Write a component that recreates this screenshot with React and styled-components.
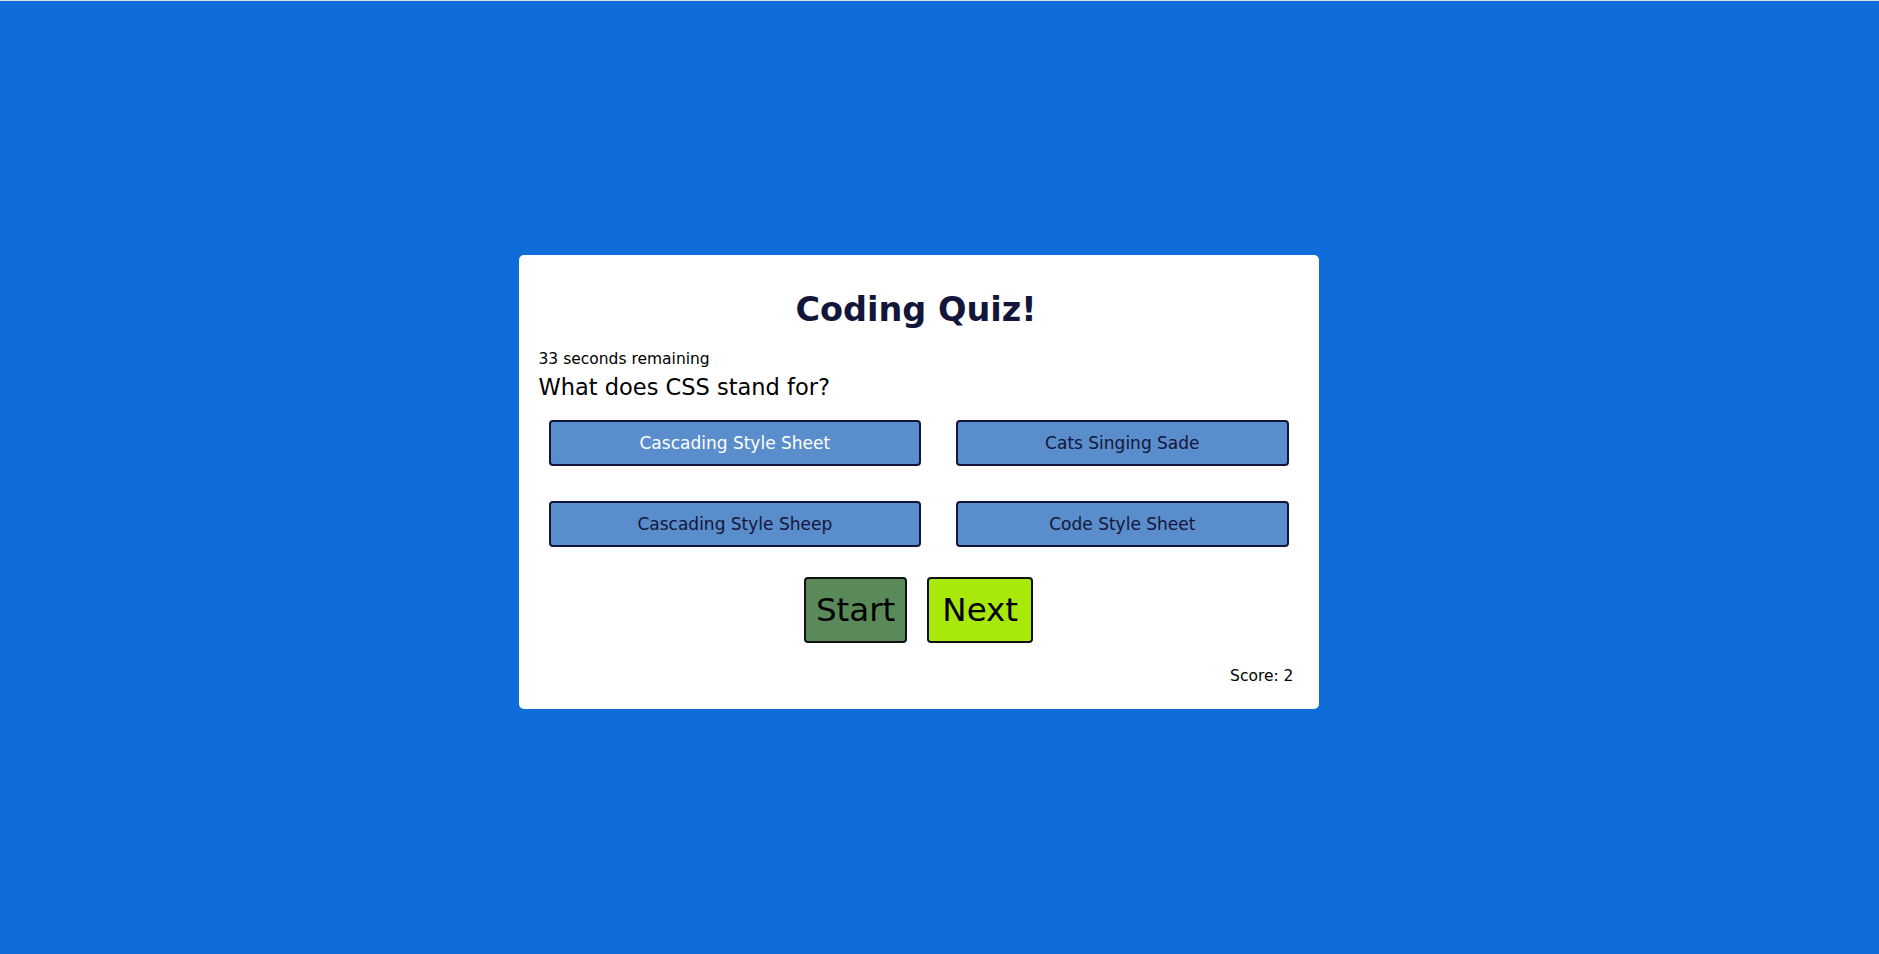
import React, { useState } from "react";
import styled, { createGlobalStyle } from "styled-components";

const GlobalStyle = createGlobalStyle`
  html, body {
    margin: 0;
    padding: 0;
    background: #106cd9;
  }
  body {
    font-family: "DejaVu Sans", Verdana, sans-serif;
  }
`;

const Page = styled.main`
  min-height: 954px;
  box-sizing: border-box;
  border-top: 1px solid #dfe3e8;
  display: flex;
  justify-content: center;
  align-items: center;
  padding: 9px 42px 0 0;
`;

const Card = styled.section`
  width: 800px;
  box-sizing: border-box;
  background: #ffffff;
  border-radius: 5px;
  padding: 35px 25px 24px 20px;
  display: flex;
  flex-direction: column;
`;

const Title = styled.h1`
  margin: 0 0 21px;
  text-align: center;
  font-size: 33.5px;
  font-weight: bold;
  color: #13153a;
`;

const Timer = styled.p`
  margin: 0 0 6px;
  font-size: 15.5px;
  color: #000;
`;

const Question = styled.h2`
  margin: 0 0 20px;
  font-size: 22.5px;
  font-weight: normal;
  color: #000;
`;

const Answers = styled.div`
  display: grid;
  grid-template-columns: auto auto;
  gap: 35px 35px;
  margin: 0 5px 0 10px;
`;

const AnswerButton = styled.button`
  height: 46px;
  box-sizing: border-box;
  border: 2px solid #13163a;
  border-radius: 4px;
  background: #5a8dcb;
  color: ${({ $active }) => ($active ? "#ffffff" : "#13153a")};
  font-family: inherit;
  font-size: 17px;
  padding: 0 24px;
  cursor: pointer;
`;

const Controls = styled.div`
  display: flex;
  justify-content: center;
  gap: 20px;
  margin: 30px 0 24px;
  padding-left: 5px;
`;

const ControlButton = styled.button`
  height: 66px;
  box-sizing: border-box;
  border: 2px solid #111;
  border-radius: 4px;
  background: ${({ $tone }) => $tone};
  color: #000;
  font-family: inherit;
  font-size: 32.5px;
  padding: 0 ${({ $pad }) => $pad}px;
  cursor: pointer;
`;

const Score = styled.p`
  margin: 0;
  text-align: right;
  font-size: 15.5px;
  color: #000;
`;

const answers = [
  "Cascading Style Sheet",
  "Cats Singing Sade",
  "Cascading Style Sheep",
  "Code Style Sheet",
];

export default function App() {
  const [hovered] = useState(0);

  return (
    <>
      <GlobalStyle />
      <Page>
        <Card>
          <Title>Coding Quiz!</Title>
          <Timer>33 seconds remaining</Timer>
          <Question>What does CSS stand for?</Question>
          <Answers>
            {answers.map((a, i) => (
              <AnswerButton key={a} $active={i === hovered}>
                {a}
              </AnswerButton>
            ))}
          </Answers>
          <Controls>
            <ControlButton $tone="#5a8a5a" $pad={10}>Start</ControlButton>
            <ControlButton $tone="#a9e80b" $pad={13}>Next</ControlButton>
          </Controls>
          <Score>Score: 2</Score>
        </Card>
      </Page>
    </>
  );
}
